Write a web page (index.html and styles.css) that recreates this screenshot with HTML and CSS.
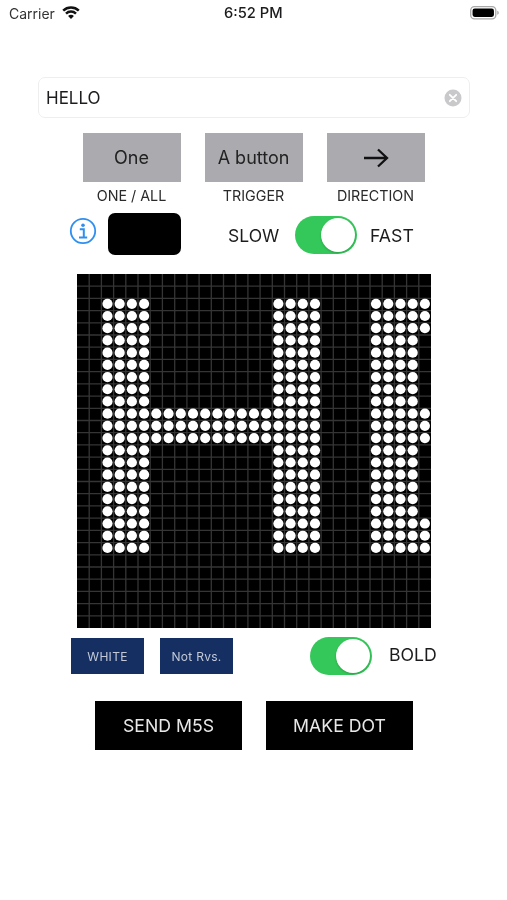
FILE: index.html
```html
<!DOCTYPE html>
<html lang="en">
<head>
<meta charset="utf-8">
<title>LED dot display</title>
<link rel="stylesheet" href="styles.css">
</head>
<body>
<div class="page">
<div class="status">
  <div class="status-left">
    <span>Carrier</span>
    <svg class="wifi" viewBox="0 0 18 13" width="18" height="13"><path d="M1.2 4.6a11.3 11.3 0 0 1 15.6 0" fill="none" stroke="#111" stroke-width="2.5"/><path d="M4 7.6a7.3 7.3 0 0 1 10 0" fill="none" stroke="#111" stroke-width="2.5"/><path d="M9 13l-2.9-3a4 4 0 0 1 5.8 0z" fill="#111"/></svg>
  </div>
  <span class="status-time">6:52 PM</span>
  <svg class="battery" viewBox="0 0 30 14" width="29" height="13.5"><rect x="0.7" y="0.7" width="26" height="12.6" rx="3.8" fill="none" stroke="#a9a9a9" stroke-width="1.4"/><rect x="2.6" y="2.6" width="22.2" height="8.8" rx="2.2" fill="#000"/><path d="M28.2 4.8c1 .3 1.6 1.1 1.6 2.2s-.6 1.9-1.6 2.2z" fill="#a9a9a9"/></svg>
</div>

<div class="field">
  <span class="field-text">HELLO</span>
  <svg class="clear" viewBox="0 0 18 18" width="18" height="18"><circle cx="9" cy="9" r="8.5" fill="#c9c9cc"/><path d="M5.8 5.8l6.4 6.4M12.2 5.8l-6.4 6.4" stroke="#fff" stroke-width="1.8" stroke-linecap="round"/></svg>
</div>

<div class="options">
  <div class="option">
    <div class="option-btn">One</div>
    <div class="option-label">ONE / ALL</div>
  </div>
  <div class="option">
    <div class="option-btn">A button</div>
    <div class="option-label">TRIGGER</div>
  </div>
  <div class="option">
    <div class="option-btn">
      <svg viewBox="0 0 26 20" width="26" height="20"><path d="M1 10h23M15 1.5l9 8.5-9 8.5" fill="none" stroke="#111" stroke-width="2.3"/></svg>
    </div>
    <div class="option-label">DIRECTION</div>
  </div>
</div>

<div class="speed">
  <svg class="info" viewBox="0 0 28 28" width="28" height="28"><circle cx="14" cy="14" r="12.2" fill="none" stroke="#2f8ff0" stroke-width="1.8"/><circle cx="14" cy="8.2" r="1.8" fill="#2f8ff0"/><path d="M10.8 12.2h4v8M10 20.4h8.2" fill="none" stroke="#2f8ff0" stroke-width="2"/></svg>
  <div class="swatch"></div>
  <span class="speed-slow">SLOW</span>
  <div class="toggle toggle-speed"><div class="knob"></div></div>
  <span class="speed-fast">FAST</span>
</div>

<div class="board">
  <svg viewBox="0 0 354 354" width="354" height="354">
    <defs>
      <g id="c3" fill="#fff">
        <circle cy="0" r="5.1"/><circle cy="12.207" r="5.1"/><circle cy="24.414" r="5.1"/>
      </g>
      <g id="c21">
        <use href="#c3"/><use href="#c3" y="36.62"/><use href="#c3" y="73.24"/><use href="#c3" y="109.86"/><use href="#c3" y="146.48"/><use href="#c3" y="183.1"/><use href="#c3" y="219.72"/>
      </g>
    </defs>
    <path class="grid-lines" d="M12.2 0V354M24.4 0V354M36.6 0V354M48.8 0V354M61 0V354M73.2 0V354M85.4 0V354M97.7 0V354M109.9 0V354M122.1 0V354M134.3 0V354M146.5 0V354M158.7 0V354M170.9 0V354M183.1 0V354M195.3 0V354M207.5 0V354M219.7 0V354M231.9 0V354M244.1 0V354M256.3 0V354M268.6 0V354M280.8 0V354M293 0V354M305.2 0V354M317.4 0V354M329.6 0V354M341.8 0V354M0 12.2H354M0 24.4H354M0 36.6H354M0 48.8H354M0 61H354M0 73.2H354M0 85.4H354M0 97.7H354M0 109.9H354M0 122.1H354M0 134.3H354M0 146.5H354M0 158.7H354M0 170.9H354M0 183.1H354M0 195.3H354M0 207.5H354M0 219.7H354M0 231.9H354M0 244.1H354M0 256.3H354M0 268.6H354M0 280.8H354M0 293H354M0 305.2H354M0 317.4H354M0 329.6H354M0 341.8H354"/>
    <g transform="translate(0 29.8)">
      <use href="#c21" x="30.5"/><use href="#c21" x="42.7"/><use href="#c21" x="54.9"/><use href="#c21" x="67.1"/>
      <use href="#c3" x="79.3" y="109.86"/><use href="#c3" x="91.6" y="109.86"/><use href="#c3" x="103.8" y="109.86"/><use href="#c3" x="116" y="109.86"/><use href="#c3" x="128.2" y="109.86"/><use href="#c3" x="140.4" y="109.86"/><use href="#c3" x="152.6" y="109.86"/><use href="#c3" x="164.8" y="109.86"/><use href="#c3" x="177" y="109.86"/><use href="#c3" x="189.2" y="109.86"/>
      <use href="#c21" x="201.4"/><use href="#c21" x="213.6"/><use href="#c21" x="225.8"/><use href="#c21" x="238"/>
      <use href="#c21" x="299"/><use href="#c21" x="311.3"/><use href="#c21" x="323.5"/><use href="#c21" x="335.7"/>
      <use href="#c3" x="347.9"/><use href="#c3" x="347.9" y="109.86"/><use href="#c3" x="347.9" y="219.72"/>
    </g>
  </svg>
</div>

<div class="settings">
  <div class="small-btn">WHITE</div>
  <div class="small-btn">Not Rvs.</div>
  <div class="toggle toggle-bold"><div class="knob"></div></div>
  <span class="bold-label">BOLD</span>
</div>

<div class="actions">
  <div class="action-btn">SEND M5S</div>
  <div class="action-btn">MAKE DOT</div>
</div>
</div>
</body>
</html>
```
FILE: styles.css
```css
* { box-sizing: border-box; }
html, body { margin: 0; padding: 0; }
body {
  width: 507px;
  height: 900px;
  overflow: hidden;
  background: #fff;
  color: #1c1c1e;
  font-family: Inter, "Liberation Sans", sans-serif;
}
.page { height: 900px; filter: blur(0.45px); }
.status {
  height: 28px;
  padding: 5px 8px 0 9px;
  display: flex;
  align-items: flex-start;
  justify-content: space-between;
  font-size: 14px;
  line-height: 17px;
  position: relative;
}
.status-left { display: flex; align-items: flex-start; gap: 7px; color: #333; }
.wifi { margin-top: 1px; }
.status-time { font-size: 14.7px; font-weight: 500; position: absolute; left: 224px; top: 5px; }
.battery { margin-top: 1px; }

.field {
  margin: 49px 37px 0 38px;
  height: 41px;
  padding: 0 7px;
  display: flex;
  align-items: center;
  justify-content: space-between;
  border: 1px solid #eeeeef;
  border-radius: 7px;
  font-size: 17px;
}
.options {
  margin-top: 15px;
  display: flex;
  justify-content: center;
  gap: 24px;
}
.option { width: 98px; display: flex; flex-direction: column; align-items: center; }
.option-btn {
  width: 100%;
  height: 49px;
  background: #abaaaf;
  display: flex;
  align-items: center;
  justify-content: center;
  font-size: 18px;
  color: #222;
}
.option-label { margin-top: 5px; font-size: 14.3px; line-height: 17px; color: #2a2a2a; }

.speed {
  margin-top: 9px;
  padding-left: 69px;
  height: 42px;
  display: flex;
  align-items: center;
}
.info { margin-right: 11px; margin-top: -6px; }
.swatch { width: 73px; height: 42px; border-radius: 7px; background: #000; margin-right: 47px; }
.speed-slow { font-size: 17.5px; width: 67px; margin-top: 2px; }
.speed-fast { font-size: 17.7px; margin-left: 13px; margin-top: 2px; }
.toggle {
  width: 62px;
  height: 38px;
  border-radius: 19px;
  background: #34c759;
  padding: 2px;
  display: flex;
  justify-content: flex-end;
}
.toggle-speed { margin-top: 2px; }
.knob {
  width: 34px;
  height: 34px;
  border-radius: 50%;
  background: #fff;
  box-shadow: 0 1px 2px rgba(0, 0, 0, 0.2);
}
.board {
  margin: 19px 0 0 77px;
  width: 354px;
  height: 354px;
  background-color: #000;
}
.board svg { display: block; }
.grid-lines { fill: none; stroke: #353535; stroke-width: 1.3; }

.settings {
  margin-top: 9px;
  padding-left: 71px;
  height: 38px;
  display: flex;
  align-items: center;
}
.small-btn {
  width: 73px;
  height: 36px;
  margin-right: 16px;
  background: #152f63;
  color: #c3c9d6;
  font-size: 12px;
  letter-spacing: 0.3px;
  display: flex;
  align-items: center;
  justify-content: center;
}
.toggle-bold { margin-left: 61px; }
.bold-label { font-size: 17.7px; margin-left: 17px; margin-top: -3px; }

.actions {
  margin-top: 26px;
  padding-left: 95px;
  display: flex;
  gap: 24px;
}
.action-btn {
  width: 147px;
  height: 49px;
  background: #000;
  color: #e8e8e8;
  font-size: 17.7px;
  display: flex;
  align-items: center;
  justify-content: center;
}
```
